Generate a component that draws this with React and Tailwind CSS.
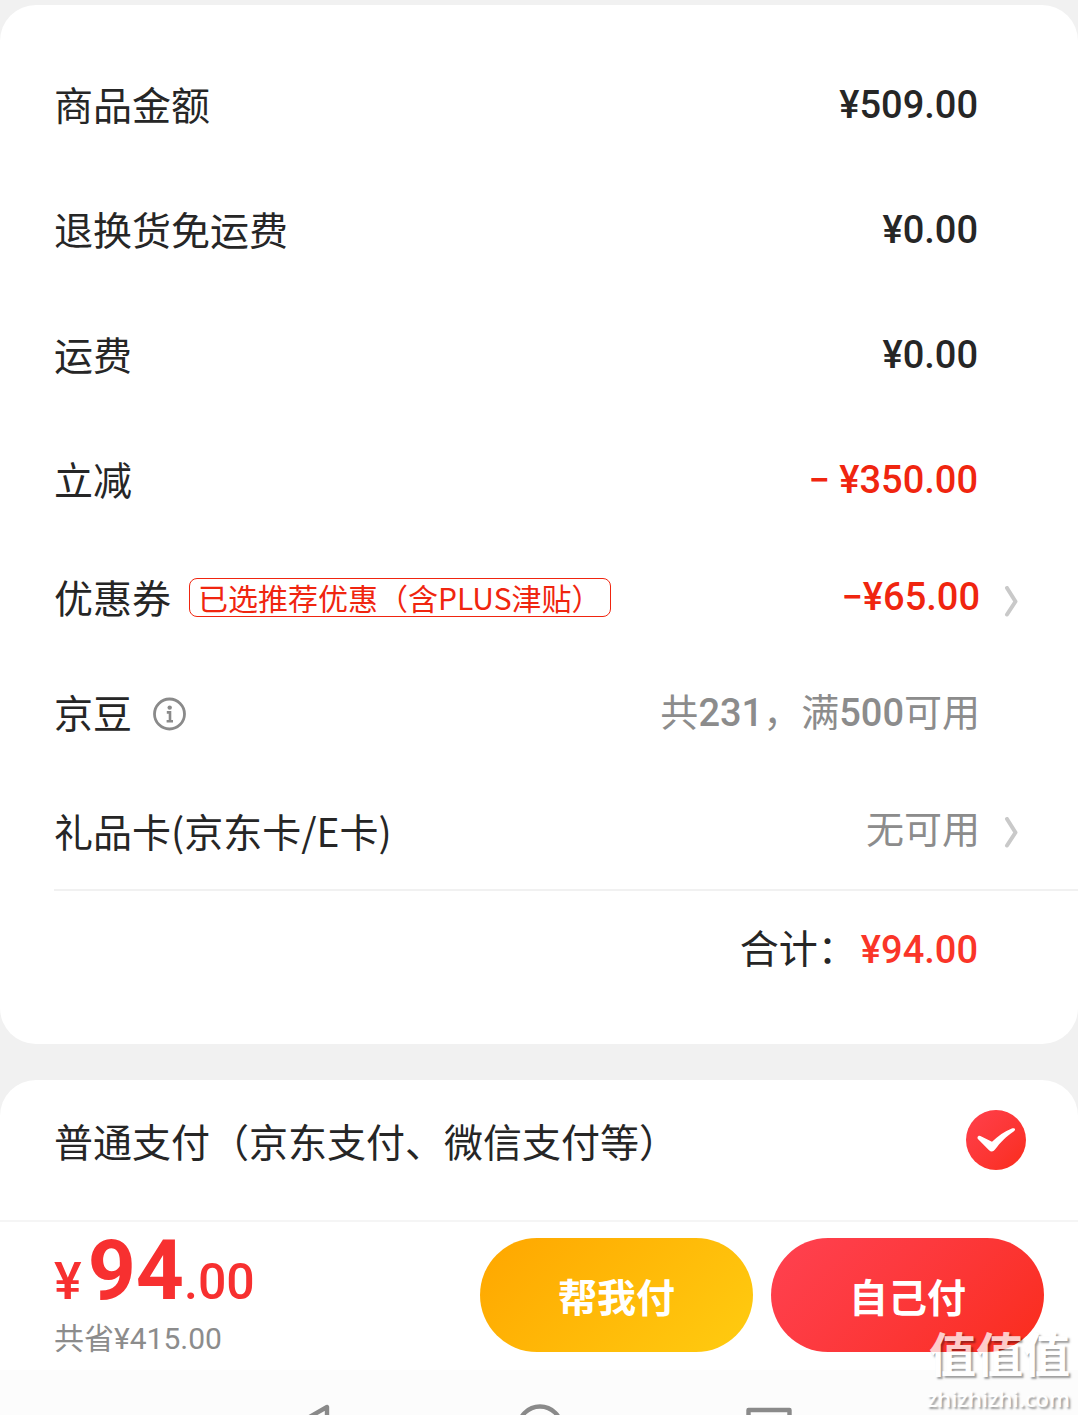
import React, { useState } from "react";

const amounts = [
  { label: "商品金额", value: "¥509.00" },
  { label: "退换货免运费", value: "¥0.00" },
  { label: "运费", value: "¥0.00" },
  { label: "立减", value: "− ¥350.00", discount: true },
];

const Chevron = () => (
  <svg viewBox="0 0 16 32" className="w-4 h-8 shrink-0" fill="none" aria-hidden="true">
    <path d="M3 2 11.5 15.5 3 28.5" stroke="#c9c9c9" strokeWidth="4" strokeLinecap="round" strokeLinejoin="round" />
  </svg>
);

const InfoIcon = () => (
  <svg viewBox="0 0 34 34" className="w-[34px] h-[34px]" fill="none" aria-hidden="true">
    <circle cx="16.5" cy="17" r="15" stroke="#8a8a8a" strokeWidth="2.8" />
    <circle cx="16.7" cy="10.6" r="2.2" fill="#8a8a8a" />
    <path d="M13.8 15.4H17V24M13.6 24.2H20" stroke="#8a8a8a" strokeWidth="2.6" />
  </svg>
);

const App = () => {
  const [payment, setPayment] = useState("normal");

  return (
    <div className="relative overflow-hidden bg-[#f1f1f1] pt-[5px] text-[39px] leading-[48px] text-[#262626] font-['Noto_Sans_CJK_SC',sans-serif]">
      <section className="rounded-[36px] bg-white pt-[38px]">
        {amounts.map((item) => (
          <div key={item.label} className="flex h-[125px] items-center justify-between pl-[54px] pr-[100px]">
            <span className="mb-1.5">{item.label}</span>
            <span
              className={`text-[38px] font-medium font-['Roboto',sans-serif] mb-0.5 ${item.discount ? "text-[#f0250f]" : ""}`}
            >
              {item.value}
            </span>
          </div>
        ))}

        <button type="button" className="flex h-[117px] w-full items-center pl-[54px] pr-[58px] text-left">
          <span className="mb-3">优惠券</span>
          <span className="ml-[18px] mb-2 rounded-lg border border-[#f0250f] px-2 text-[30px] leading-[37px] text-[#f0250f]">
            已选推荐优惠（含PLUS津贴）
          </span>
          <span className="ml-auto mr-6 mb-2.5 text-[38px] font-medium font-['Roboto',sans-serif] text-[#f0250f]">
            −¥65.00
          </span>
          <Chevron />
        </button>

        <div className="flex h-[117px] items-center pl-[54px] pr-[98px]">
          <span className="mb-4">京豆</span>
          <button type="button" aria-label="京豆说明" className="ml-[21px] mb-2.5">
            <InfoIcon />
          </button>
          <span className="ml-auto mb-3.5 text-[38px] text-[#8c8c8c]">
            共<span className="font-medium font-['Roboto',sans-serif]">231</span>，满
            <span className="font-medium font-['Roboto',sans-serif]">500</span>可用
          </span>
        </div>

        <button type="button" className="flex h-[112px] w-full items-center pl-[54px] pr-[58px] text-left">
          <span className="mb-1.5">礼品卡(京东卡/E卡)</span>
          <span className="ml-auto mr-6 mb-3 text-[38px] text-[#8c8c8c]">无可用</span>
          <Chevron />
        </button>

        <div className="ml-[54px] flex h-[155px] items-start justify-end border-t-2 border-[#f1f1f1] pt-[31px] pr-[100px]">
          <span>合计：</span>
          <span className="ml-1 pt-1 text-[38px] font-medium font-['Roboto',sans-serif] text-[#fa3528]">¥94.00</span>
        </div>
      </section>

      <section className="mt-9 rounded-t-[36px] bg-white">
        <label className="flex h-[140px] items-start justify-between pl-[54px] pr-[52px] pt-[30px]">
          <span className="pt-1.5">普通支付（京东支付、微信支付等）</span>
          <span className="relative h-[60px] w-[60px] shrink-0">
            <input
              type="radio"
              name="payment"
              value="normal"
              checked={payment === "normal"}
              onChange={(e) => setPayment(e.target.value)}
              className="block h-[60px] w-[60px] appearance-none rounded-full bg-linear-135 from-[#ff404b] to-[#fa2c19]"
            />
            <svg viewBox="0 0 60 60" className="pointer-events-none absolute inset-0" aria-hidden="true">
              <path
                d="M12.5 26C11 27 11.3 28.6 12.4 29.6L22.8 40C25 42.2 27.2 42 29 39.6C34.5 32 40 26.5 47.6 21.4C50.4 19.5 48.8 17.4 45.8 18.4C38.5 21.2 32 26 26 31.8L15.4 26.6C14.4 26 13.4 25.6 12.5 26Z"
                fill="#fff"
              />
            </svg>
          </span>
        </label>
      </section>

      <footer className="flex h-[150px] items-start border-t-2 border-[#f5f5f5] bg-white pl-[54px] pr-[34px] pt-4">
        <div className="mr-auto pt-[3px]">
          <div className="flex items-baseline font-['Roboto',sans-serif] text-[#f73030] leading-[60px]">
            <span className="mr-1.5 text-[52px] font-medium">¥</span>
            <span className="text-[84px] font-bold">94</span>
            <span className="text-[50px] font-medium">.00</span>
          </div>
          <p className="mt-[5px] text-[30px] leading-[44px] text-[#8c8c8c] font-['Roboto','Noto_Sans_CJK_SC',sans-serif]">
            共省¥415.00
          </p>
        </div>
        <div className="flex gap-[18px] font-bold text-white">
          <button type="button" className="h-[114px] w-[273px] rounded-full bg-linear-135 from-[#ffa600] to-[#ffcc10]">
            帮我付
          </button>
          <button type="button" className="h-[114px] w-[273px] rounded-full bg-linear-135 from-[#ff4150] to-[#fa2c19]">
            自己付
          </button>
        </div>
      </footer>

      <nav className="h-[45px] overflow-hidden bg-[#fcfcfc] pt-8">
        <div className="mx-auto grid w-[64%] grid-cols-3 justify-items-center">
          <button type="button" aria-label="返回">
            <svg viewBox="0 0 48 48" className="h-12 w-12" fill="none" stroke="#8a8a8a" strokeWidth="4.4" strokeLinejoin="round">
              <path d="M42 5V46L7 25Z" />
            </svg>
          </button>
          <button type="button" aria-label="主页">
            <svg viewBox="0 0 48 48" className="h-12 w-12" fill="none" stroke="#8a8a8a" strokeWidth="4.4">
              <circle cx="25" cy="26" r="21.5" />
            </svg>
          </button>
          <button type="button" aria-label="最近任务">
            <svg viewBox="0 0 48 48" className="h-12 w-12" fill="none" stroke="#8a8a8a" strokeWidth="4.4" strokeLinejoin="round">
              <rect x="3.5" y="8" width="41" height="38" />
            </svg>
          </button>
        </div>
      </nav>

      <div className="pointer-events-none absolute bottom-1.5 right-2 text-right text-white opacity-75 [text-shadow:2px_2px_2px_rgba(0,0,0,0.5)]">
        <p className="mb-3 text-[47px] leading-[46px] font-bold">值值值</p>
        <p className="text-[22px] leading-[22px] font-semibold font-['Open_Sans',sans-serif]">zhizhizhi.com</p>
      </div>
    </div>
  );
};

export default App;
